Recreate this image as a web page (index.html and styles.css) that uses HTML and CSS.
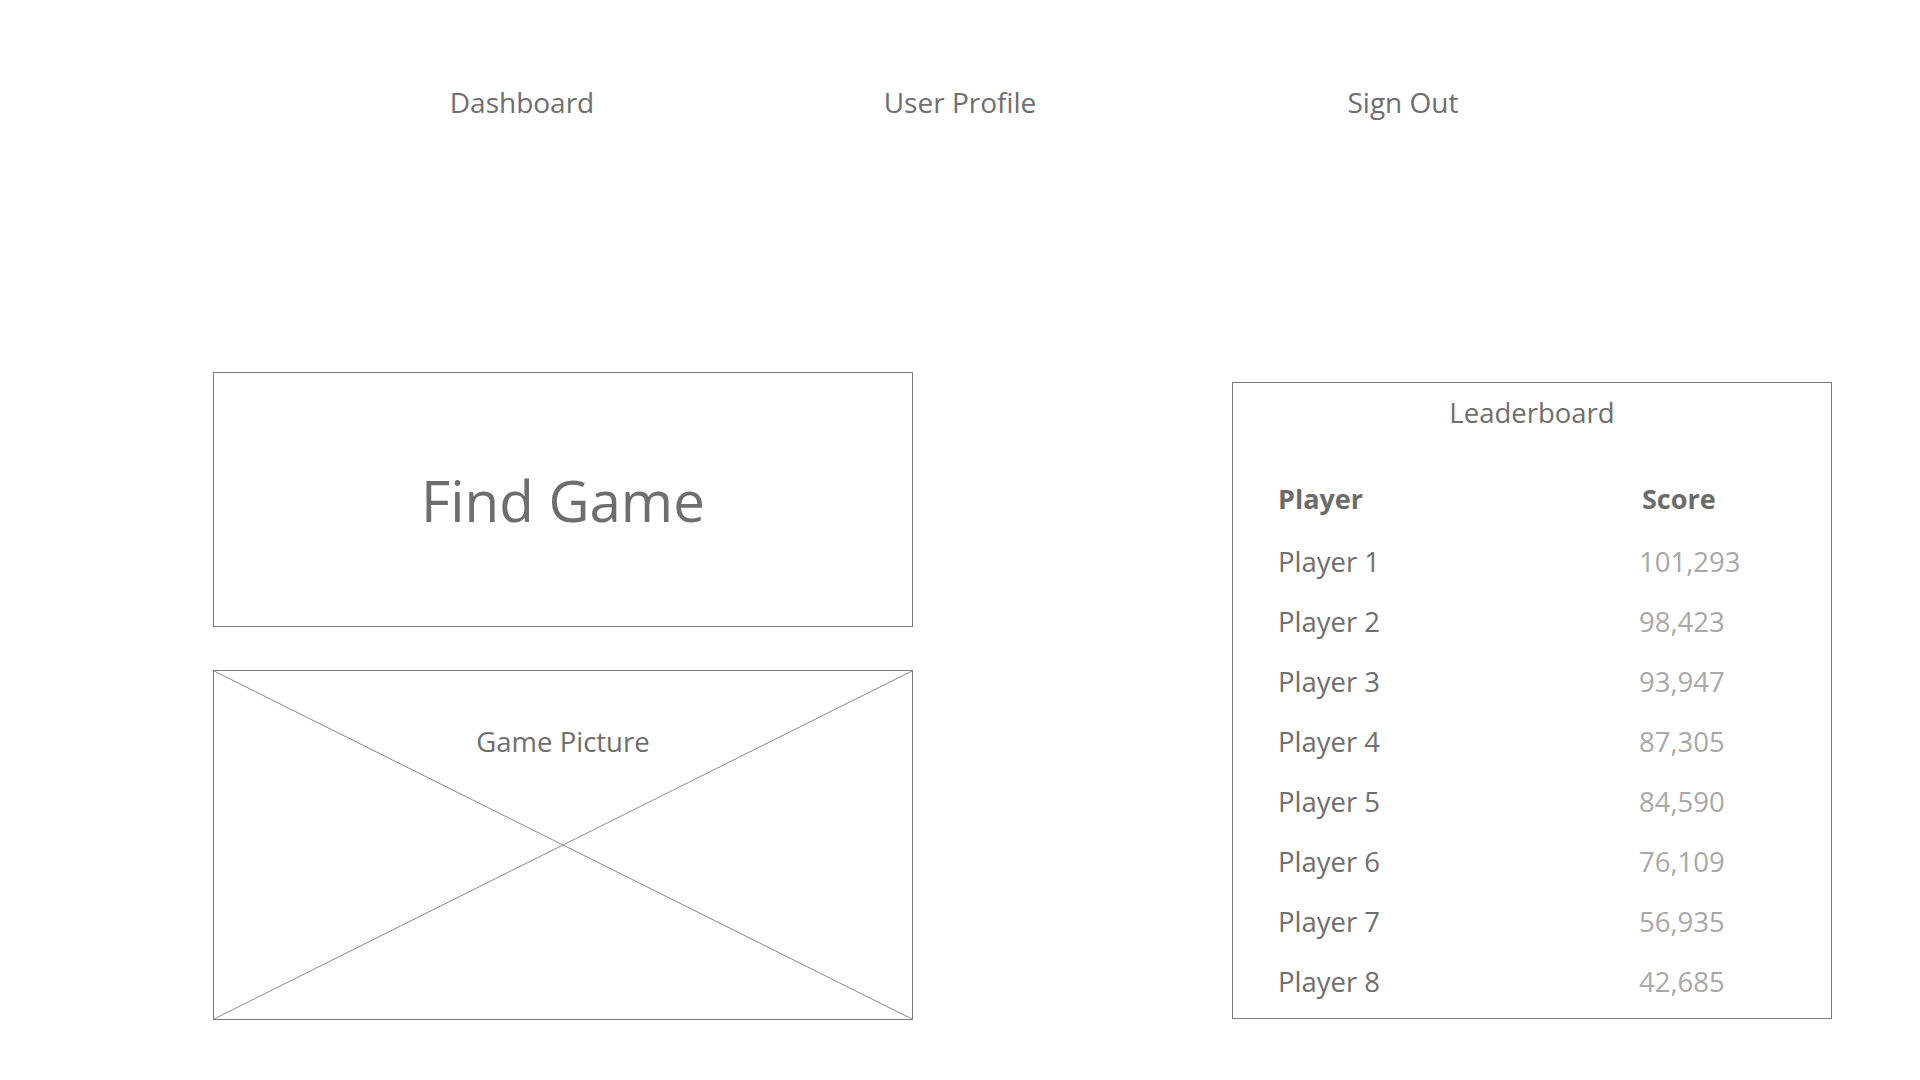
FILE: index.html
```html
<!DOCTYPE html>
<html lang="en">
<head>
<meta charset="utf-8">
<title>Game Dashboard</title>
<link rel="stylesheet" href="styles.css">
</head>
<body>
<nav class="nav">
  <a class="nav-item">Dashboard</a>
  <a class="nav-item">User Profile</a>
  <a class="nav-item">Sign Out</a>
</nav>
<main class="main">
  <section class="left-col">
    <div class="find-game">Find Game</div>
    <div class="picture">
      <svg class="picture-x" viewBox="0 0 100 100" preserveAspectRatio="none" aria-hidden="true">
        <line x1="0" y1="0" x2="100" y2="100" vector-effect="non-scaling-stroke"/>
        <line x1="100" y1="0" x2="0" y2="100" vector-effect="non-scaling-stroke"/>
      </svg>
      <div class="picture-label">Game Picture</div>
    </div>
  </section>
  <section class="leaderboard">
    <div class="lb-title">Leaderboard</div>
    <div class="lb-table">
      <div class="lb-head">Player</div><div class="lb-head">Score</div>
      <div class="lb-player">Player 1</div><div class="lb-score">101,293</div>
      <div class="lb-player">Player 2</div><div class="lb-score">98,423</div>
      <div class="lb-player">Player 3</div><div class="lb-score">93,947</div>
      <div class="lb-player">Player 4</div><div class="lb-score">87,305</div>
      <div class="lb-player">Player 5</div><div class="lb-score">84,590</div>
      <div class="lb-player">Player 6</div><div class="lb-score">76,109</div>
      <div class="lb-player">Player 7</div><div class="lb-score">56,935</div>
      <div class="lb-player">Player 8</div><div class="lb-score">42,685</div>
    </div>
  </section>
</main>
</body>
</html>
```
FILE: styles.css
```css
* { box-sizing: border-box; }
html, body {
  margin: 0;
  background: #ffffff;
}
body {
  font-family: "Open Sans", "Noto Sans", "Liberation Sans", sans-serif;
  color: #6e6e6e;
  width: 1920px;
  height: 1080px;
  overflow: hidden;
}
.nav {
  display: flex;
  justify-content: center;
  padding-top: 82px;
}
.nav-item {
  width: 442px;
  text-align: center;
  font-size: 28px;
  line-height: 40px;
  color: #6e6e6e;
}
.nav-item:nth-child(1) { position: relative; left: 4px; }
.nav-item:nth-child(3) { position: relative; left: 1px; }
.main {
  display: flex;
  align-items: flex-start;
  gap: 320px;
  padding-left: 213px;
  margin-top: 250px;
}
.left-col {
  width: 700px;
  display: flex;
  flex-direction: column;
  gap: 43px;
}
.find-game {
  height: 255px;
  border: 1px solid #7a7a7a;
  display: flex;
  align-items: center;
  justify-content: center;
  font-size: 56.5px;
  line-height: 70px;
  padding-top: 2px;
  color: #6e6e6e;
}
.picture {
  position: relative;
  height: 350px;
  border: 1px solid #7a7a7a;
}
.picture-x {
  position: absolute;
  inset: 0;
  width: 100%;
  height: 100%;
}
.picture-x line {
  stroke: #8a8a8a;
  stroke-width: 1;
}
.picture-label {
  position: relative;
  text-align: center;
  font-size: 27.5px;
  line-height: 40px;
  padding-top: 51px;
  color: #6e6e6e;
}
.leaderboard {
  width: 600px;
  height: 637px;
  margin-top: 10px;
  margin-left: -1px;
  border: 1px solid #7a7a7a;
  padding: 10px 0 0 45px;
}
.lb-title {
  text-align: center;
  margin-left: -45px;
  font-size: 27.5px;
  line-height: 40px;
  color: #6e6e6e;
}
.lb-table {
  display: grid;
  grid-template-columns: 364px 1fr;
  grid-auto-rows: 60px;
  align-items: center;
  margin-top: 36px;
}
.lb-head {
  font-weight: 700;
  font-size: 27px;
  line-height: 40px;
  color: #6b6b6b;
}
.lb-player {
  font-size: 27.5px;
  line-height: 40px;
  color: #6e6e6e;
  position: relative;
  top: 3px;
}
.lb-score {
  font-size: 27.5px;
  line-height: 40px;
  color: #a8a8a8;
  margin-left: -3px;
  position: relative;
  top: 3px;
}
```
